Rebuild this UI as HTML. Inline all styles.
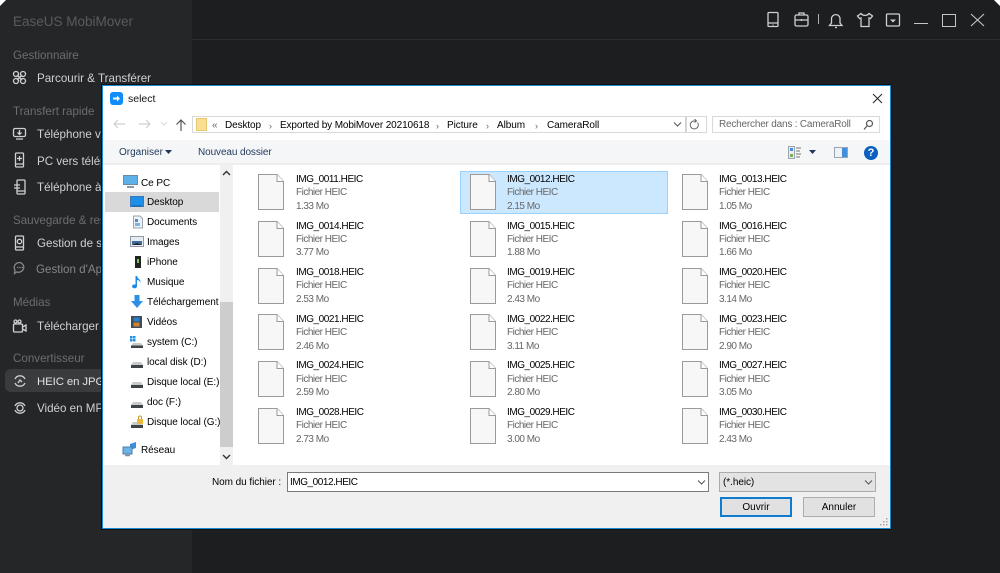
<!DOCTYPE html>
<html><head><meta charset="utf-8"><style>
html,body{margin:0;padding:0;background:#fff}
#r{position:relative;width:1000px;height:573px;overflow:hidden;background:#1d1e20;font-family:"Liberation Sans",sans-serif;font-size:10px;color:#1a1a1a}
#r div,#r svg{position:absolute}
.t{white-space:nowrap;line-height:14px;transform:translateY(1px)}
.s{color:#6c6d70;font-size:11.6px}
.n{color:#cfd0d1;font-size:11.6px}
.ic{stroke:#cfd0d1;fill:none;stroke-width:1.3}
.f{color:#000;font-size:10px;letter-spacing:-.06px}
.m{color:#000;font-size:10px;letter-spacing:-.45px}
.g{color:#666;font-size:10px;letter-spacing:-.5px}
.p{width:26px;height:36px}
</style></head><body><div id="r">
<svg style="width:0;height:0;left:0;top:0"><defs><symbol id="d" viewBox="0 0 26 36"><path d="M.5 .5H19L25.5 7.5V35.5H.5Z" fill="#f7f7f7" stroke="#9a9a9a"/><path d="M19 .5V7.5H25.5" fill="#fff" stroke="#9a9a9a"/></symbol></defs></svg>
<div style="left:0;top:0;width:192px;height:573px;background:#252628"></div>
<div style="left:192px;top:39px;width:808px;height:1px;background:#2c2d2f"></div>
<svg style="left:0;top:0" width="8" height="8"><path d="M0 0H6L0 6Z" fill="#fff"/></svg>
<svg style="left:992px;top:0" width="8" height="8"><path d="M2 0H8V6Z" fill="#fff"/></svg>
<div class="t" style="left:13px;top:14px;color:#5a5b5f;font-size:13.5px">EaseUS MobiMover</div>
<div class="t s" style="left:13px;top:48px">Gestionnaire</div>
<div class="t n" style="left:37px;top:71px">Parcourir &amp; Transférer</div>
<div class="t s" style="left:13px;top:104px">Transfert rapide</div>
<div class="t n" style="left:37px;top:127px">Téléphone vers PC</div>
<div class="t n" style="left:37px;top:154px">PC vers téléphone</div>
<div class="t n" style="left:37px;top:180px">Téléphone à téléphone</div>
<div class="t s" style="left:13px;top:213px">Sauvegarde &amp; restauration</div>
<div class="t n" style="left:37px;top:236px">Gestion de sauvegarde</div>
<div class="t" style="left:36px;top:262px;color:#85868a;font-size:11.6px">Gestion d'Apps</div>
<div class="t s" style="left:13px;top:295px">Médias</div>
<div class="t n" style="left:37px;top:319px">Télécharger une vidéo</div>
<div class="t s" style="left:13px;top:351px">Convertisseur</div>
<div style="left:5px;top:369px;width:100px;height:23px;background:#3a3b3d;border-radius:6px"></div>
<div class="t" style="left:37px;top:374px;color:#e2e2e3;font-size:11.4px;letter-spacing:-.1px">HEIC en JPG</div>
<div class="t n" style="left:37px;top:401px">Vidéo en MP3</div>
<svg class="ic" style="left:12px;top:70px" width="16" height="16"><rect x="1.5" y="1.5" width="5" height="5" rx="2.5"/><rect x="8.5" y="1.5" width="5" height="5" rx="2.5"/><rect x="1.5" y="8.5" width="5" height="5" rx="2.5"/><rect x="8.5" y="8.5" width="5" height="5" rx="2.5"/><path d="M5 5L10 10M10 5L5 10"/></svg>
<svg class="ic" style="left:12px;top:127px" width="16" height="14"><rect x="1.5" y="1.5" width="12" height="8" rx="1.5"/><path d="M4 12H11M7.5 3V7M5.5 5.5L7.5 7.5L9.5 5.5"/></svg>
<svg class="ic" style="left:14px;top:152px" width="12" height="17"><rect x="1.5" y="1" width="8" height="14" rx="1"/><path d="M1.5 12H9.5M5.5 4V9M3 6.5H8"/></svg>
<svg class="ic" style="left:13px;top:179px" width="14" height="17"><rect x="4" y="1" width="8" height="14" rx="1"/><path d="M4 12H12M1 6H7M1 9H7"/></svg>
<svg class="ic" style="left:14px;top:235px" width="12" height="17"><rect x="1.5" y="1" width="8" height="14" rx="1"/><path d="M1.5 12H9.5"/><circle cx="5.5" cy="6.5" r="2.2"/></svg>
<svg style="left:13px;top:261px" width="14" height="14" fill="none" stroke="#85868a" stroke-width="1.3"><path d="M7 1.5A5.5 5 0 1 1 3.5 11L1.5 12.5L2 9A5.5 5 0 0 1 7 1.5Z"/><path d="M4 6.5H5.5M6.3 6.5H7.8M8.6 6.5H10"/></svg>
<svg class="ic" style="left:12px;top:318px" width="16" height="16"><rect x="1.5" y="6" width="9" height="8" rx="1"/><circle cx="3.5" cy="3.5" r="1.5"/><circle cx="7.5" cy="3.5" r="1.5"/><path d="M10.5 9L14 7V13L10.5 11"/></svg>
<svg class="ic" style="left:13px;top:374px" width="14" height="14" stroke-width="1.5"><path d="M2 5A5.5 5.5 0 0 1 12 5M12 9A5.5 5.5 0 0 1 2 9"/><path d="M5 9L7 6L9 8"/></svg>
<svg class="ic" style="left:13px;top:401px" width="14" height="14"><path d="M2 5A5.5 5.5 0 0 1 12 5M12 9A5.5 5.5 0 0 1 2 9"/><circle cx="7" cy="7" r="3"/></svg>

<svg class="ic" style="left:765px;top:10px" width="18" height="20"><rect x="3" y="2.5" width="10" height="14" rx="1"/><path d="M3 13H13M7.5 15H8.5"/></svg>
<svg class="ic" style="left:793px;top:11px" width="18" height="18"><rect x="2" y="4" width="13" height="11" rx="1.5"/><path d="M6 4V2H11V4M2 9H15M8.5 8V10"/></svg>
<div style="left:818px;top:14px;width:1px;height:10px;background:#b0b0b0"></div>
<svg class="ic" style="left:827px;top:11px" width="18" height="18"><path d="M2.5 14.5H15L13 12V7A4.5 5 0 0 0 4.5 7V12Z"/><path d="M8 16.5H10"/></svg>
<svg class="ic" style="left:856px;top:11px" width="18" height="18"><path d="M5 2.5L1.5 5L3.5 7.5L5 7V15.5H13V7L14.5 7.5L16.5 5L13 2.5C11.5 5 6.5 5 5 2.5Z"/></svg>
<svg class="ic" style="left:885px;top:12px" width="16" height="16" stroke-width="1.4"><rect x="1.5" y="2" width="13" height="12" rx="1"/><path d="M5 7.5H11L8 10.5Z" fill="#cfd0d1" stroke="none"/></svg>
<div style="left:914px;top:23px;width:14px;height:1px;background:#c4c5c6"></div>
<div style="left:942px;top:14px;width:12px;height:11px;border:1.2px solid #c4c5c6"></div>
<svg style="left:969px;top:13px" width="16" height="14" stroke="#c4c5c6" stroke-width="1.1"><path d="M2 1L15 13M15 1L2 13"/></svg>

<div style="left:102px;top:85px;width:789px;height:444px;background:#fff;box-sizing:border-box;border:1px solid #1a8ad4;box-shadow:0 0 0 1px #111"></div>
<div style="left:110px;top:92px;width:13px;height:13px;background:#0f8dfa;border-radius:3px"></div>
<svg style="left:112px;top:95px" width="9" height="7"><path d="M1 2.5H5V0.5L8 3.5L5 6.5V4.5H1Z" fill="#fff"/></svg>
<div class="t" style="left:128px;top:91px;font-size:10.5px;color:#111">select</div>
<svg style="left:870px;top:91px" width="14" height="14" stroke="#222" stroke-width="1"><path d="M3 3L12 12M12 3L3 12"/></svg>

<svg style="left:112px;top:117px" width="18" height="14" stroke="#cfcfcf" stroke-width="1.2" fill="none"><path d="M2 7H13M6 3L2 7L6 11"/></svg>
<svg style="left:137px;top:117px" width="18" height="14" stroke="#cfcfcf" stroke-width="1.2" fill="none"><path d="M2 7H13M9 3L13 7L9 11"/></svg>
<svg style="left:160px;top:120px" width="8" height="8" stroke="#d8d8d8" fill="none"><path d="M1 2L4 5L7 2"/></svg>
<svg style="left:174px;top:118px" width="14" height="14" stroke="#555" stroke-width="1.2" fill="none"><path d="M7 13V2M2.5 6.5L7 2L11.5 6.5"/></svg>
<div style="left:192px;top:116px;width:493px;height:15px;border:1px solid #d9d9d9"></div>
<div style="left:685px;top:116px;width:20px;height:15px;border:1px solid #d9d9d9;border-left:1px solid #d0d0d0"></div>
<div style="left:196px;top:118px;width:11px;height:13px;background:#fbdf90;border:1px solid #e6c871;box-sizing:border-box"></div>
<div class="t" style="left:212px;top:118px;color:#666;font-size:10px">«</div>
<div class="t f" style="left:225px;top:118px;letter-spacing:-.1px">Desktop</div>
<div class="t" style="left:269px;top:118px;color:#666;font-size:9px">›</div>
<div class="t f" style="left:280px;top:118px;letter-spacing:-.12px">Exported by MobiMover 20210618</div>
<div class="t" style="left:436px;top:118px;color:#666;font-size:9px">›</div>
<div class="t f" style="left:447px;top:118px">Picture</div>
<div class="t" style="left:486px;top:118px;color:#666;font-size:9px">›</div>
<div class="t f" style="left:497px;top:118px">Album</div>
<div class="t" style="left:535px;top:118px;color:#666;font-size:9px">›</div>
<div class="t f" style="left:547px;top:118px">CameraRoll</div>
<svg style="left:673px;top:121px" width="9" height="7" stroke="#555" fill="none"><path d="M1 1.5L4.5 5L8 1.5"/></svg>
<svg style="left:688px;top:119px" width="12" height="12" stroke="#666" fill="none"><path d="M9.5 3.5A4 4 0 1 1 5.5 2H8M6.5 0L8.5 2L6.5 3.5"/></svg>
<div style="left:712px;top:116px;width:166px;height:15px;border:1px solid #d9d9d9"></div>
<div class="t" style="left:719px;top:117px;color:#666;font-size:10px;letter-spacing:-.2px">Rechercher dans : CameraRoll</div>
<svg style="left:862px;top:119px" width="12" height="12" stroke="#555" stroke-width="1.2" fill="none"><circle cx="7.5" cy="4.5" r="3"/><path d="M5 7L2 10.5"/></svg>

<div style="left:103px;top:140px;width:787px;height:23px;background:#f5f6f7"></div>
<div style="left:103px;top:163px;width:787px;height:2px;background:#eeeeee"></div>
<div class="t" style="left:119px;top:145px;color:#1e395b;font-size:10px">Organiser</div>
<svg style="left:165px;top:150px" width="8" height="5"><path d="M0 0H7L3.5 4Z" fill="#1e395b"/></svg>
<div class="t" style="left:198px;top:145px;color:#1e395b;font-size:10px;letter-spacing:-.1px">Nouveau dossier</div>
<svg style="left:788px;top:146px" width="15" height="13"><rect x="0.5" y="0.5" width="6" height="12" fill="#e8edf2" stroke="#9aa5b0"/><rect x="2" y="2" width="3" height="3" fill="#4a90d9"/><rect x="2" y="8" width="3" height="3" fill="#7cae57"/><path d="M8 2H13M8 5H12M8 8H13M8 11H12" stroke="#777"/></svg>
<svg style="left:809px;top:150px" width="8" height="5"><path d="M0 0H7L3.5 4Z" fill="#1e395b"/></svg>
<svg style="left:834px;top:147px" width="14" height="11"><rect x="0.5" y="0.5" width="13" height="10" fill="#eef2f6" stroke="#9aa5b0"/><rect x="8" y="1" width="5" height="9" fill="#3f8fdd"/></svg>
<div style="left:864px;top:146px;width:14px;height:14px;border-radius:50%;background:#0a5fc0;color:#fff;font-size:11px;font-weight:bold;line-height:14px;text-align:center">?</div>

<div style="left:105px;top:192px;width:114px;height:20px;background:#d9d9d9"></div>
<div style="left:220px;top:165px;width:13px;height:300px;background:#f0f0f0"></div>
<div style="left:220px;top:302px;width:13px;height:145px;background:#cdcdcd"></div>
<svg style="left:222px;top:170px" width="9" height="6" stroke="#333" stroke-width="1.4" fill="none"><path d="M1 5L4.5 1.5L8 5"/></svg>
<svg style="left:222px;top:454px" width="9" height="6" stroke="#333" stroke-width="1.4" fill="none"><path d="M1 1L4.5 4.5L8 1"/></svg>

<svg style="left:123px;top:175px" width="16" height="14"><rect x="0.5" y="0.5" width="14" height="9" fill="#5db0e8" stroke="#6d8ca3"/><path d="M4 12H11" stroke="#8a9aa6" stroke-width="2"/></svg>
<div class="t f" style="left:141px;top:176px">Ce PC</div>
<svg style="left:130px;top:195px" width="15" height="14"><rect x="0.5" y="1.5" width="13" height="10" fill="#1d8fe8" stroke="#3a79b8"/><path d="M2 11H12" stroke="#0f5fa8"/></svg>
<div class="t f" style="left:147px;top:195px">Desktop</div>
<svg style="left:132px;top:215px" width="12" height="14"><path d="M1.5 1H8L10.5 3.5V13H1.5Z" fill="#eef2f6" stroke="#9aa5b0"/><rect x="3" y="4" width="3" height="3" fill="#4a90d9"/><rect x="3" y="8" width="5" height="3" fill="#7fb2dd"/></svg>
<div class="t f" style="left:147px;top:215px">Documents</div>
<svg style="left:130px;top:236px" width="15" height="12"><rect x="0.5" y="0.5" width="13" height="10" fill="#e6ecf2" stroke="#8f9aa5"/><path d="M2 5H12V9H2Z" fill="#3e6d9c"/><path d="M2 9L7 7L12 9Z" fill="#222"/></svg>
<div class="t f" style="left:147px;top:235px">Images</div>
<svg style="left:134px;top:255px" width="8" height="14"><rect x="1" y="1" width="6" height="12" fill="#1f2324"/><rect x="3" y="4" width="2" height="4" fill="#7fc24d"/></svg>
<div class="t f" style="left:147px;top:255px">iPhone</div>
<svg style="left:132px;top:275px" width="11" height="15"><path d="M5 1V11A2.5 2 0 1 1 3.5 9.5V1H5C5.5 4 9 4 8.5 8C8 6 6.5 5 5 5Z" fill="#1e8ae6"/></svg>
<div class="t f" style="left:147px;top:275px">Musique</div>
<svg style="left:130px;top:295px" width="14" height="14"><path d="M4.5 0H9.5V6H13L7 13L1 6H4.5Z" fill="#2e8fe6"/></svg>
<div class="t f" style="left:147px;top:295px">Téléchargement</div>
<svg style="left:130px;top:315px" width="14" height="14"><rect x="1" y="1" width="11" height="12" fill="#3f4d5a"/><rect x="3.5" y="2.5" width="6" height="4" fill="#2a80c8"/><rect x="3.5" y="7.5" width="6" height="4" fill="#d0822c"/></svg>
<div class="t f" style="left:147px;top:315px">Vidéos</div>
<svg style="left:130px;top:335px" width="15" height="14"><rect x="0" y="1" width="2.5" height="2.5" fill="#1e90e8"/><rect x="3" y="1" width="2.5" height="2.5" fill="#1e90e8"/><rect x="0" y="4" width="2.5" height="2.5" fill="#1e90e8"/><rect x="3" y="4" width="2.5" height="2.5" fill="#1e90e8"/><path d="M3 8H11L13 11H1Z" fill="#c8cbcc"/><rect x="1" y="10.5" width="12" height="2.5" fill="#3f4547"/></svg>
<div class="t f" style="left:147px;top:335px">system (C:)</div>
<svg style="left:130px;top:355px" width="15" height="14"><path d="M3 7H11L13 10H1Z" fill="#c8cbcc"/><rect x="1" y="10" width="12" height="3" fill="#3f4547"/></svg>
<div class="t f" style="left:147px;top:355px">local disk (D:)</div>
<svg style="left:130px;top:375px" width="15" height="14"><path d="M3 7H11L13 10H1Z" fill="#c8cbcc"/><rect x="1" y="10" width="12" height="3" fill="#3f4547"/></svg>
<div class="t f" style="left:147px;top:375px">Disque local (E:)</div>
<svg style="left:130px;top:395px" width="15" height="14"><path d="M3 7H11L13 10H1Z" fill="#c8cbcc"/><rect x="1" y="10" width="12" height="3" fill="#3f4547"/></svg>
<div class="t f" style="left:147px;top:395px">doc (F:)</div>
<svg style="left:130px;top:415px" width="15" height="14"><path d="M3 7H11L13 10H1Z" fill="#c8cbcc"/><rect x="1" y="10" width="12" height="3" fill="#3f4547"/><rect x="7" y="4" width="6" height="5" fill="#e9b93c"/><path d="M8.5 4V2.5A1.5 1.5 0 0 1 11.5 2.5V4" stroke="#c99a2a" fill="none"/></svg>
<div class="t f" style="left:147px;top:415px">Disque local (G:)</div>
<svg style="left:122px;top:441px" width="16" height="16"><path d="M8 3L14 1V7L8 9Z" fill="#3b8edb"/><rect x="1" y="6" width="9" height="7" fill="#6db3e8" stroke="#4a7ea8"/><path d="M3 14.5H8" stroke="#7f8f9c" stroke-width="1.5"/></svg>
<div class="t f" style="left:141px;top:443px">Réseau</div>

<div style="left:460px;top:171px;width:206px;height:41px;background:#cce8ff;border:1px solid #99d1ff"></div>

<svg class="p" style="left:258px;top:174px"><use href="#d"/></svg>
<div class="t m" style="left:296px;top:172px">IMG_0011.HEIC</div><div class="t g" style="left:296px;top:185px">Fichier HEIC</div><div class="t g" style="left:296px;top:199px">1.33 Mo</div>
<svg class="p" style="left:470px;top:174px"><use href="#d"/></svg>
<div class="t m" style="left:507px;top:172px">IMG_0012.HEIC</div><div class="t g" style="left:507px;top:185px">Fichier HEIC</div><div class="t g" style="left:507px;top:199px">2.15 Mo</div>
<svg class="p" style="left:682px;top:174px"><use href="#d"/></svg>
<div class="t m" style="left:719px;top:172px">IMG_0013.HEIC</div><div class="t g" style="left:719px;top:185px">Fichier HEIC</div><div class="t g" style="left:719px;top:199px">1.05 Mo</div>

<svg class="p" style="left:258px;top:221px"><use href="#d"/></svg>
<div class="t m" style="left:296px;top:219px">IMG_0014.HEIC</div><div class="t g" style="left:296px;top:232px">Fichier HEIC</div><div class="t g" style="left:296px;top:245px">3.77 Mo</div>
<svg class="p" style="left:470px;top:221px"><use href="#d"/></svg>
<div class="t m" style="left:507px;top:219px">IMG_0015.HEIC</div><div class="t g" style="left:507px;top:232px">Fichier HEIC</div><div class="t g" style="left:507px;top:245px">1.88 Mo</div>
<svg class="p" style="left:682px;top:221px"><use href="#d"/></svg>
<div class="t m" style="left:719px;top:219px">IMG_0016.HEIC</div><div class="t g" style="left:719px;top:232px">Fichier HEIC</div><div class="t g" style="left:719px;top:245px">1.66 Mo</div>

<svg class="p" style="left:258px;top:268px"><use href="#d"/></svg>
<div class="t m" style="left:296px;top:265px">IMG_0018.HEIC</div><div class="t g" style="left:296px;top:278px">Fichier HEIC</div><div class="t g" style="left:296px;top:292px">2.53 Mo</div>
<svg class="p" style="left:470px;top:268px"><use href="#d"/></svg>
<div class="t m" style="left:507px;top:265px">IMG_0019.HEIC</div><div class="t g" style="left:507px;top:278px">Fichier HEIC</div><div class="t g" style="left:507px;top:292px">2.43 Mo</div>
<svg class="p" style="left:682px;top:268px"><use href="#d"/></svg>
<div class="t m" style="left:719px;top:265px">IMG_0020.HEIC</div><div class="t g" style="left:719px;top:278px">Fichier HEIC</div><div class="t g" style="left:719px;top:292px">3.14 Mo</div>

<svg class="p" style="left:258px;top:314px"><use href="#d"/></svg>
<div class="t m" style="left:296px;top:312px">IMG_0021.HEIC</div><div class="t g" style="left:296px;top:325px">Fichier HEIC</div><div class="t g" style="left:296px;top:339px">2.46 Mo</div>
<svg class="p" style="left:470px;top:314px"><use href="#d"/></svg>
<div class="t m" style="left:507px;top:312px">IMG_0022.HEIC</div><div class="t g" style="left:507px;top:325px">Fichier HEIC</div><div class="t g" style="left:507px;top:339px">3.11 Mo</div>
<svg class="p" style="left:682px;top:314px"><use href="#d"/></svg>
<div class="t m" style="left:719px;top:312px">IMG_0023.HEIC</div><div class="t g" style="left:719px;top:325px">Fichier HEIC</div><div class="t g" style="left:719px;top:339px">2.90 Mo</div>

<svg class="p" style="left:258px;top:361px"><use href="#d"/></svg>
<div class="t m" style="left:296px;top:358px">IMG_0024.HEIC</div><div class="t g" style="left:296px;top:372px">Fichier HEIC</div><div class="t g" style="left:296px;top:385px">2.59 Mo</div>
<svg class="p" style="left:470px;top:361px"><use href="#d"/></svg>
<div class="t m" style="left:507px;top:358px">IMG_0025.HEIC</div><div class="t g" style="left:507px;top:372px">Fichier HEIC</div><div class="t g" style="left:507px;top:385px">2.80 Mo</div>
<svg class="p" style="left:682px;top:361px"><use href="#d"/></svg>
<div class="t m" style="left:719px;top:358px">IMG_0027.HEIC</div><div class="t g" style="left:719px;top:372px">Fichier HEIC</div><div class="t g" style="left:719px;top:385px">3.05 Mo</div>

<svg class="p" style="left:258px;top:408px"><use href="#d"/></svg>
<div class="t m" style="left:296px;top:405px">IMG_0028.HEIC</div><div class="t g" style="left:296px;top:418px">Fichier HEIC</div><div class="t g" style="left:296px;top:432px">2.73 Mo</div>
<svg class="p" style="left:470px;top:408px"><use href="#d"/></svg>
<div class="t m" style="left:507px;top:405px">IMG_0029.HEIC</div><div class="t g" style="left:507px;top:418px">Fichier HEIC</div><div class="t g" style="left:507px;top:432px">3.00 Mo</div>
<svg class="p" style="left:682px;top:408px"><use href="#d"/></svg>
<div class="t m" style="left:719px;top:405px">IMG_0030.HEIC</div><div class="t g" style="left:719px;top:418px">Fichier HEIC</div><div class="t g" style="left:719px;top:432px">2.43 Mo</div>

<div style="left:103px;top:465px;width:787px;height:63px;background:#f0f0f0"></div>
<div class="t f" style="left:212px;top:475px">Nom du fichier :</div>
<div style="left:287px;top:472px;width:420px;height:18px;background:#fff;border:1px solid #7a7a7a"></div>
<div class="t m" style="left:290px;top:475px">IMG_0012.HEIC</div>
<svg style="left:697px;top:479px" width="9" height="7" stroke="#555" fill="none"><path d="M1 1.5L4.5 5L8 1.5"/></svg>
<div style="left:719px;top:472px;width:155px;height:18px;background:#e3e3e3;border:1px solid #aaa"></div>
<div class="t f" style="left:723px;top:475px">(*.heic)</div>
<svg style="left:864px;top:479px" width="9" height="7" stroke="#555" fill="none"><path d="M1 1.5L4.5 5L8 1.5"/></svg>
<div style="left:720px;top:497px;width:68px;height:16px;background:#e1e1e1;border:2px solid #0d7bd0;text-align:center;line-height:18px;color:#000;font-size:10px">Ouvrir</div>
<div style="left:803px;top:497px;width:70px;height:18px;background:#e1e1e1;border:1px solid #adadad;text-align:center;line-height:20px;color:#000;font-size:10px">Annuler</div>
<svg style="left:880px;top:518px" width="9" height="9" fill="#a8a8a8"><rect x="6" y="0" width="1.5" height="1.5"/><rect x="3" y="3" width="1.5" height="1.5"/><rect x="6" y="3" width="1.5" height="1.5"/><rect x="0" y="6" width="1.5" height="1.5"/><rect x="3" y="6" width="1.5" height="1.5"/><rect x="6" y="6" width="1.5" height="1.5"/></svg>
</div></body></html>
